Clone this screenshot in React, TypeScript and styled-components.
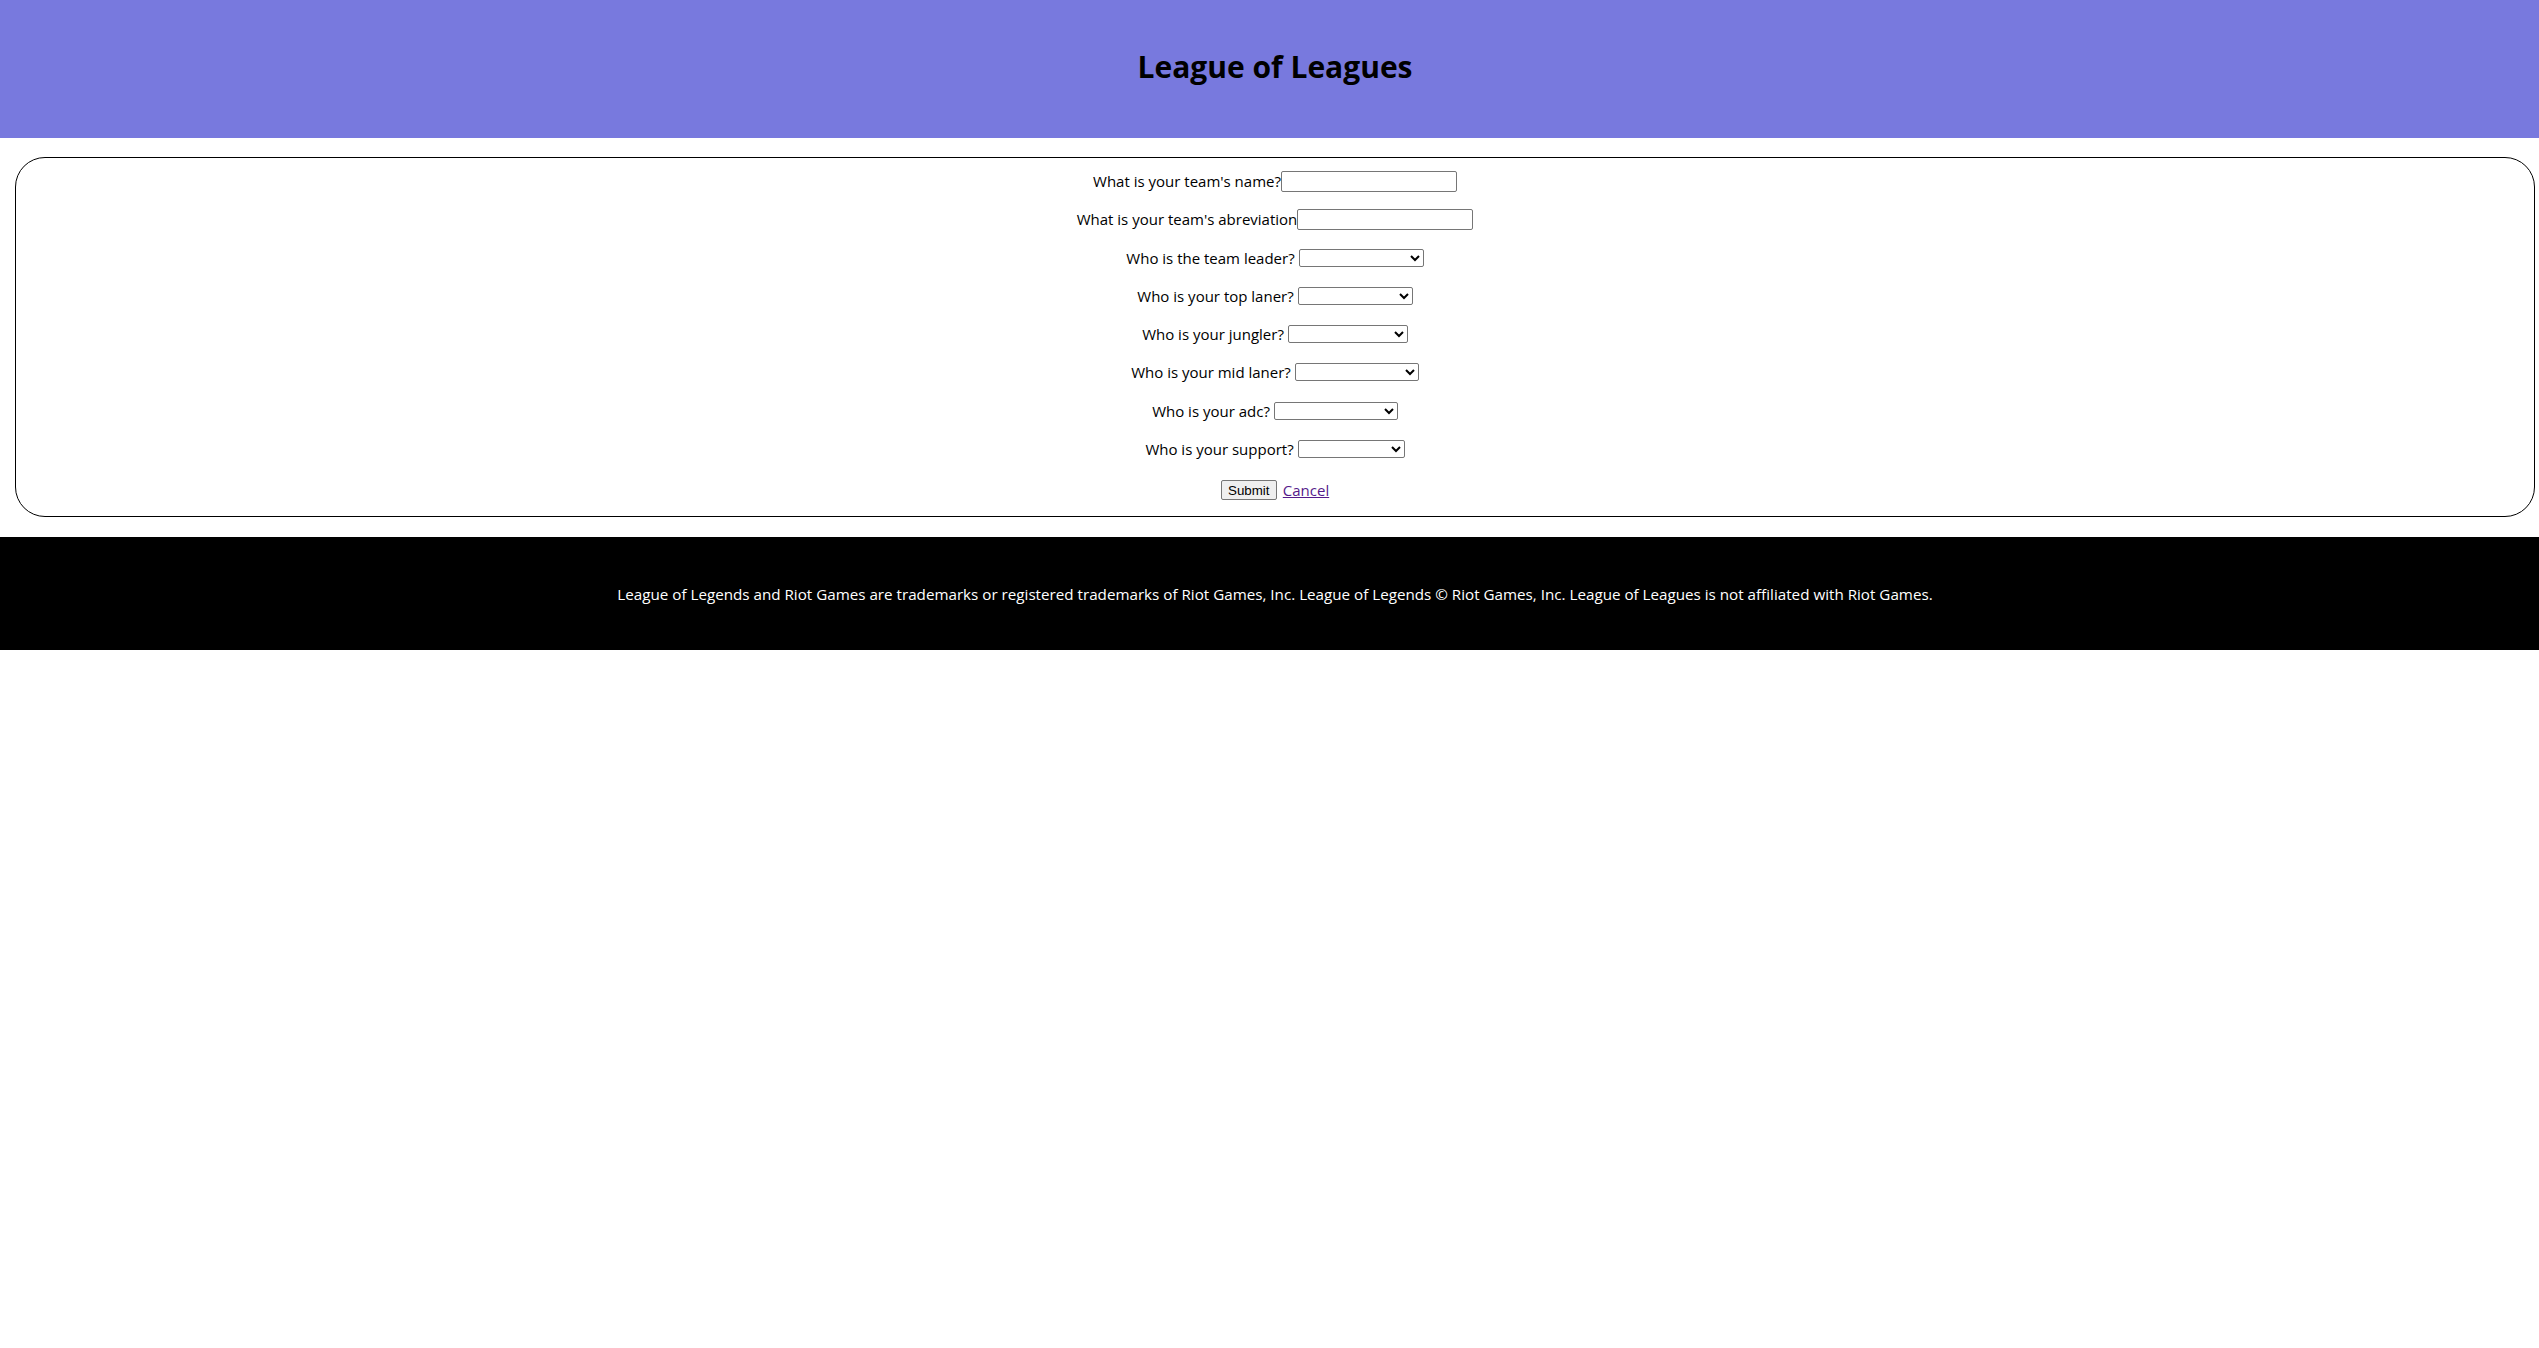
import React from "react";
import styled, { createGlobalStyle } from "styled-components";

const GlobalStyle = createGlobalStyle`
  html, body { margin: 0; padding: 0; background: #ffffff; }
  body { font-family: "Open Sans", "Noto Sans", sans-serif; color: #000000; }
`;

const Header = styled.header`
  height: 138px;
  box-sizing: border-box;
  background: #7879de;
  display: flex;
  align-items: center;
  justify-content: center;
  padding-left: 11px;
  padding-bottom: 5px;
`;

const Title = styled.h1`
  margin: 0;
  font-size: 30px;
  font-weight: 700;
  color: #000000;
`;

const FormBox = styled.form`
  margin: 19px 4px 20px 15px;
  border: 1px solid #000000;
  border-radius: 30px;
  padding: 12px 0 15px;
  display: flex;
  flex-direction: column;
  align-items: center;
  gap: 16.25px;
`;

const Row = styled.div<{ $gap: number }>`
  display: flex;
  align-items: center;
  justify-content: center;
  height: 22px;
  gap: ${(p) => p.$gap}px;
  font-size: 15px;
`;

const Label = styled.label`
  white-space: nowrap;
`;

const TextInput = styled.input`
  box-sizing: border-box;
  width: 176px;
  height: 21px;
  border: 1px solid #767676;
  border-radius: 2px;
  padding: 1px 2px;
  margin: 0;
  background: #ffffff;
`;

const Select = styled.select<{ $w: number }>`
  box-sizing: border-box;
  width: ${(p) => p.$w}px;
  height: 18px;
  border: 1px solid #767676;
  border-radius: 2px;
  margin: 0;
  padding: 0;
  background: #ffffff;
  font-size: 13px;
`;

const Actions = styled.div`
  display: flex;
  align-items: center;
  justify-content: center;
  gap: 6px;
  height: 22px;
  margin-top: 3px;
  font-size: 15px;
`;

const SubmitButton = styled.button`
  box-sizing: border-box;
  width: 56px;
  height: 20px;
  padding: 0 6px;
  font-family: "Liberation Sans", Arial, sans-serif;
  font-size: 13.33px;
  color: #000000;
  background: #efefef;
  border: 1px solid #767676;
  border-radius: 2px;
`;

const CancelLink = styled.a`
  color: #551a8b;
  text-decoration: underline;
`;

const Footer = styled.footer`
  height: 113px;
  box-sizing: border-box;
  background: #000000;
  color: #ffffff;
  display: flex;
  align-items: center;
  justify-content: center;
  padding-left: 11px;
  font-size: 15.2px;
`;

const selects = [
  { label: "Who is the team leader?", w: 125 },
  { label: "Who is your top laner?", w: 115 },
  { label: "Who is your jungler?", w: 120 },
  { label: "Who is your mid laner?", w: 124 },
  { label: "Who is your adc?", w: 124 },
  { label: "Who is your support?", w: 107 },
];

export default function App() {
  return (
    <>
      <GlobalStyle />
      <Header>
        <Title>League of Leagues</Title>
      </Header>
      <FormBox onSubmit={(e) => e.preventDefault()}>
        <Row $gap={0}>
          <Label>What is your team's name?</Label>
          <TextInput type="text" />
        </Row>
        <Row $gap={0}>
          <Label>What is your team's abreviation</Label>
          <TextInput type="text" />
        </Row>
        {selects.map((s) => (
          <Row $gap={4} key={s.label}>
            <Label>{s.label}</Label>
            <Select $w={s.w} defaultValue="">
              <option value=""></option>
            </Select>
          </Row>
        ))}
        <Actions>
          <SubmitButton type="submit">Submit</SubmitButton>
          <CancelLink href="#">Cancel</CancelLink>
        </Actions>
      </FormBox>
      <Footer>
        League of Legends and Riot Games are trademarks or registered trademarks of Riot Games, Inc. League of Legends © Riot Games, Inc. League of Leagues is not affiliated with Riot Games.
      </Footer>
    </>
  );
}
